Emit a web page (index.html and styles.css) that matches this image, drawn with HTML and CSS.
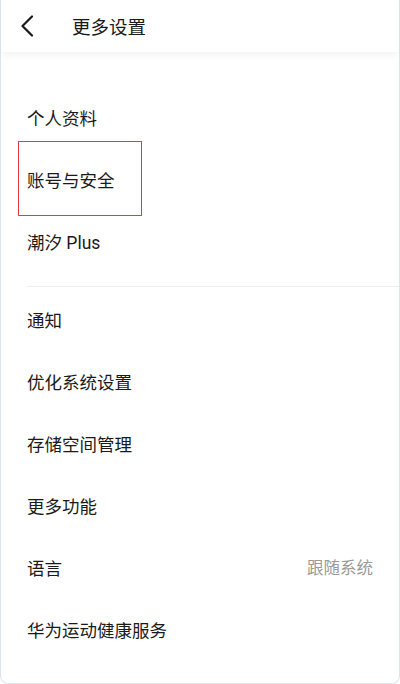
FILE: index.html
```html
<!DOCTYPE html>
<html lang="zh-CN">
<head>
    <meta charset="UTF-8">
    <meta name="viewport" content="width=device-width, initial-scale=1.0">
    <title>更多设置</title>
    <link rel="stylesheet" href="styles.css">
</head>
<body>
    <div class="sheet">
        <header class="topbar">
            <a class="back" href="#back" aria-label="返回">
                <svg width="14" height="22" viewBox="0 0 14 22">
                    <path d="M12 1.5 L2.5 11 L12 20.5" fill="none" stroke="#1a1a1a" stroke-width="2.2" stroke-linecap="round" stroke-linejoin="round"/>
                </svg>
            </a>
            <h1>更多设置</h1>
        </header>

        <div class="settings">
            <div class="group first">
                <a class="row" href="#profile">个人资料</a>
                <a class="row marked" href="#account">账号与安全</a>
                <a class="row" href="#plus">潮汐 Plus</a>
            </div>

            <div class="divider"></div>

            <div class="group">
                <a class="row" href="#notify">通知</a>
                <a class="row" href="#optimize">优化系统设置</a>
                <a class="row" href="#storage">存储空间管理</a>
                <a class="row" href="#more">更多功能</a>
                <a class="row" href="#lang">语言<span class="value">跟随系统</span></a>
                <a class="row" href="#health">华为运动健康服务</a>
            </div>
        </div>
    </div>

    <div class="under">关于潮汐</div>
</body>
</html>
```

FILE: styles.css
```css
* {
    margin: 0;
    padding: 0;
    box-sizing: border-box;
}

body {
    font-family: Roboto, "Noto Sans CJK SC", sans-serif;
    background: #ffffff;
    color: #1a1a1a;
    height: 684px;
    overflow: hidden;
}

.sheet {
    background: #ffffff;
    border: 1px solid #dfe5ea;
    border-top: none;
    border-radius: 0 0 8px 8px;
}

.topbar {
    height: 52px;
    display: flex;
    align-items: center;
    padding-left: 19px;
    background: #ffffff;
    box-shadow: 0 3px 8px rgba(0, 0, 0, 0.05);
    position: relative;
}

.back {
    display: flex;
    width: 14px;
    height: 22px;
}

.topbar h1 {
    font-size: 18.5px;
    font-weight: 400;
    margin-left: 38px;
    color: #1a1a1a;
}

.settings {
    padding: 34px 0 23px;
}

.row {
    position: relative;
    height: 62px;
    display: flex;
    align-items: center;
    justify-content: space-between;
    padding: 0 26px 0 26px;
    font-size: 17.5px;
    color: #1a1a1a;
    text-decoration: none;
}

.value {
    font-size: 16.5px;
    color: #999999;
}

/* red annotation box around the account row */
.marked::after {
    content: "";
    position: absolute;
    left: 17px;
    top: -7px;
    width: 122px;
    height: 73px;
    border: 1px solid #e8383d;
}

.divider {
    height: 1px;
    background: #eeeeee;
    margin: 14px 0 1px 26px;
}

.under {
    padding-left: 26px;
    margin-top: -4px;
    font-size: 17.5px;
    color: #1a1a1a;
}
```
